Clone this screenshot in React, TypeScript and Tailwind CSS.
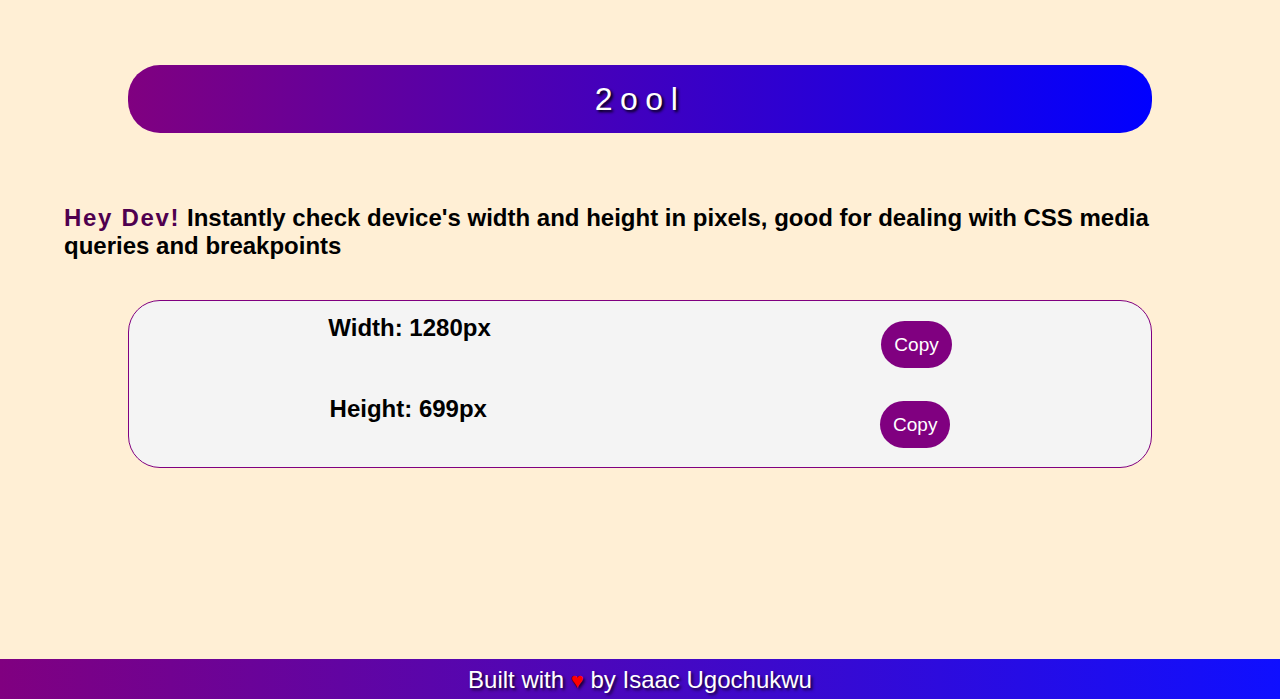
import React from "react";

export default function App() {
  const font = { fontFamily: '"Liberation Sans", Arial, sans-serif' };
  return (
    <div
      className="min-h-screen flex flex-col bg-[#ffefd5] text-black"
      style={font}
    >
      <header className="mt-[65px] mx-[10%] h-[68px] rounded-[32px] bg-[linear-gradient(to_right,#800080,#0000ff)] flex items-center justify-center">
        <h1 className="text-[32px] leading-none text-white tracking-[7.5px] [text-shadow:2px_2px_3px_#000]">
          2ool
        </h1>
      </header>

      <p className="mt-[71px] mx-[64px] text-[24px] font-bold leading-[28px]">
        <span className="text-[#4f004f] tracking-[1.7px]">Hey Dev!</span>{" "}
        Instantly check device's width and height in pixels, good for dealing
        with CSS media queries and breakpoints
      </p>

      <section className="mt-[40px] mx-[10%] border border-[#800080] rounded-[32px] bg-[#f4f4f4] px-[4px] pt-[9px] pb-[19px] flex flex-col gap-[23px]">
        <div className="flex justify-around items-start">
          <span className="text-[24px] font-bold">Width: 1280px</span>
          <button className="mt-[11px] bg-[#800080] text-white text-[19px] leading-[22px] px-[13px] py-[12.5px] rounded-full">
            Copy
          </button>
        </div>
        <div className="flex justify-around items-start">
          <span className="text-[24px] font-bold">Height: 699px</span>
          <button className="mt-[10px] bg-[#800080] text-white text-[19px] leading-[22px] px-[13px] py-[12.5px] rounded-full">
            Copy
          </button>
        </div>
      </section>

      <footer className="mt-auto h-[40px] bg-[linear-gradient(to_right,#800080,#0f0fff)] flex items-center justify-center text-white text-[24px] [text-shadow:2px_2px_3px_#1a0033]">
        <span className="translate-y-[1px]">
          Built with <span className="text-[#ff0000] text-[22px]">♥</span> by
          Isaac Ugochukwu
        </span>
      </footer>
    </div>
  );
}
